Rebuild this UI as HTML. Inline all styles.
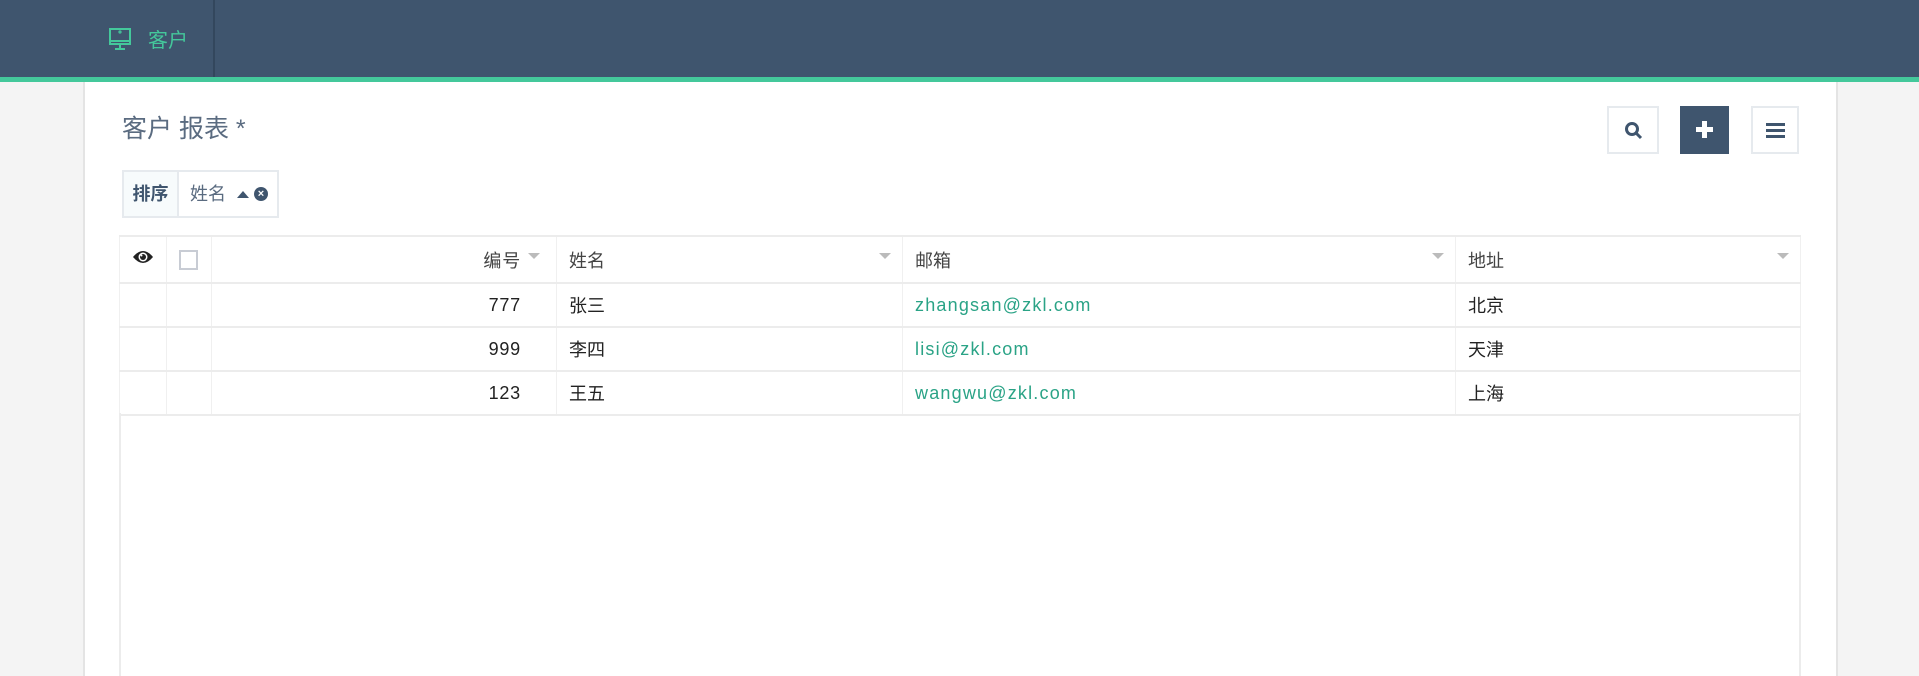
<!DOCTYPE html>
<html style="width:1919px;height:676px;overflow:hidden"><head><meta charset="utf-8"><style>
*{box-sizing:border-box;margin:0;padding:0}
body{width:1919px;height:676px;overflow:hidden;background:#f4f4f4;font-family:"Liberation Sans","Noto Sans CJK SC",sans-serif;position:relative}
.nav{position:absolute;left:0;top:0;width:1919px;height:77px;background:#3f556e}
.stripe{position:absolute;left:0;top:77px;width:1919px;height:5px;background:#44c89b}
.navdiv{position:absolute;left:213px;top:0;width:2px;height:77px;background:#33475d}
.navt{position:absolute;left:148px;top:24px;color:#44c89b;font-size:20px}
.panel{position:absolute;left:83px;top:82px;width:1755px;height:594px;background:#fff;border-left:2px solid #e4e4e4;border-right:2px solid #e4e4e4}
.title{position:absolute;left:122px;top:109px;font-size:25px;color:#5a6b80}
.btn{position:absolute;top:106px;height:48px;border:2px solid #e6eaee;background:#fff}
.tag{position:absolute;left:122px;top:170px;height:48px;width:157px;border:2px solid #e6eaee;font-size:18px;color:#3f556e}
table{position:absolute;left:119px;top:235px;width:1682px;border-collapse:collapse;font-size:18px;color:#222}
td,th{border-top:2px solid #ececec;border-bottom:2px solid #ececec;border-left:1px solid #f0f0f0;border-right:1px solid #f0f0f0;height:44px;padding:0 12px;font-weight:normal;text-align:left;white-space:nowrap}
th{height:47px;color:#444}
.r{text-align:right;letter-spacing:0.8px}
.g{color:#2aa386;letter-spacing:1.2px}
.arr{position:absolute;width:0;height:0;border-left:6px solid transparent;border-right:6px solid transparent;border-top:6px solid #bbb}
.empty{position:absolute;left:119px;top:413px;width:1682px;height:263px;border-left:2px solid #ececec;border-right:2px solid #ececec}
</style></head><body>
<div class="nav"></div><div class="stripe"></div><div class="navdiv"></div>
<svg style="position:absolute;left:109px;top:28px" width="23" height="23" viewBox="0 0 23 23" fill="none" stroke="#44c89b" stroke-width="2"><rect x="1" y="1" width="20" height="15"/><line x1="1" y1="13" x2="21" y2="13"/><line x1="11" y1="16" x2="11" y2="20"/><line x1="6" y1="21" x2="16" y2="21"/><circle cx="11" cy="4" r=".6"/></svg>
<div class="navt">客户</div>
<div class="panel"></div>
<div class="title">客户 报表 *</div>
<div class="btn" style="left:1607px;width:52px"><svg style="position:absolute;left:15px;top:13px" width="20" height="20" viewBox="0 0 20 20" fill="none" stroke="#3f556e" stroke-width="3"><circle cx="8" cy="8" r="5.5"/><line x1="12" y1="12" x2="17" y2="17"/></svg></div>
<div class="btn" style="left:1680px;width:49px;background:#3f556e;border-color:#3f556e"><svg style="position:absolute;left:13px;top:12px" width="19" height="19" viewBox="0 0 19 19"><rect x="7" y="1" width="5" height="17" fill="#fff"/><rect x="1" y="7" width="17" height="5" fill="#fff"/></svg></div>
<div class="btn" style="left:1751px;width:48px"><svg style="position:absolute;left:13px;top:13px" width="19" height="18" viewBox="0 0 19 18" fill="#3f556e"><rect y="2" width="19" height="3"/><rect y="8" width="19" height="3"/><rect y="14" width="19" height="3"/></svg></div>
<div class="tag"><div style="position:absolute;left:0;top:0;width:55px;height:44px;background:#f7fbfc;border-right:2px solid #e6eaee;font-weight:bold;text-align:center;line-height:44px">排序</div><div style="position:absolute;left:66px;top:0;line-height:44px;color:#5a6b80">姓名</div><div style="position:absolute;left:113px;top:19px;width:0;height:0;border-left:6px solid transparent;border-right:6px solid transparent;border-bottom:7px solid #3f556e"></div><div style="position:absolute;left:130px;top:15px;width:14px;height:14px;border-radius:50%;background:#3f556e;color:#fff;font-size:11px;line-height:14px;text-align:center;font-weight:bold">×</div></div>
<table>
<tr><th style="width:45px;text-align:center"><svg width="22" height="16" viewBox="0 0 22 16"><path d="M1 8Q11-4 21 8Q11 20 1 8Z" fill="#222"/><circle cx="11" cy="8" r="4.5" fill="#fff"/><circle cx="11" cy="8" r="3" fill="#222"/><circle cx="9.5" cy="6.5" r="1" fill="#fff"/></svg></th><th style="width:45px"><div style="width:19px;height:20px;border:2px solid #c8ccd4"></div></th><th class="r" style="width:345px;padding-right:35px">编号</th><th style="width:346px">姓名</th><th style="width:553px">邮箱</th><th>地址</th></tr>
<tr><td></td><td></td><td class="r" style="padding-right:35px">777</td><td>张三</td><td class="g">zhangsan@zkl.com</td><td>北京</td></tr>
<tr><td></td><td></td><td class="r" style="padding-right:35px">999</td><td>李四</td><td class="g">lisi@zkl.com</td><td>天津</td></tr>
<tr><td></td><td></td><td class="r" style="padding-right:35px">123</td><td>王五</td><td class="g">wangwu@zkl.com</td><td>上海</td></tr>
</table>
<div class="arr" style="left:528px;top:253px"></div>
<div class="arr" style="left:879px;top:253px"></div>
<div class="arr" style="left:1432px;top:253px"></div>
<div class="arr" style="left:1777px;top:253px"></div>
<div class="empty"></div>
</body></html>
